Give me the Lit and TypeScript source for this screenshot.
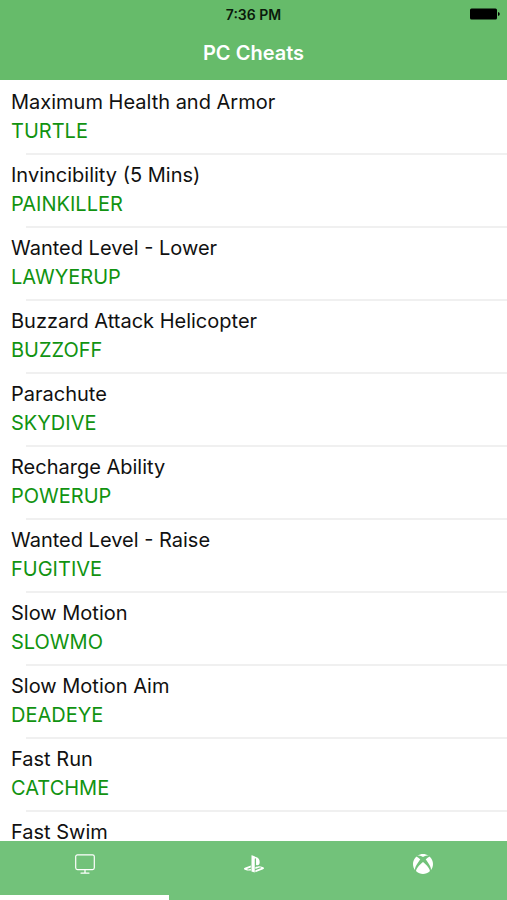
import { LitElement, html, css, nothing } from "lit";
import { customElement, state } from "lit/decorators.js";
import { classMap } from "lit/directives/class-map.js";

interface Cheat {
  name: string;
  code?: string;
}

const CHEATS: Cheat[] = [
  { name: "Maximum Health and Armor", code: "TURTLE" },
  { name: "Invincibility (5 Mins)", code: "PAINKILLER" },
  { name: "Wanted Level - Lower", code: "LAWYERUP" },
  { name: "Buzzard Attack Helicopter", code: "BUZZOFF" },
  { name: "Parachute", code: "SKYDIVE" },
  { name: "Recharge Ability", code: "POWERUP" },
  { name: "Wanted Level - Raise", code: "FUGITIVE" },
  { name: "Slow Motion", code: "SLOWMO" },
  { name: "Slow Motion Aim", code: "DEADEYE" },
  { name: "Fast Run", code: "CATCHME" },
  { name: "Fast Swim" },
];

const pcIcon = html`<svg class="icon" viewBox="1 1 20 20" aria-hidden="true">
  <rect x="1.7" y="1.8" width="18.6" height="14.8" rx="1.8" fill="none" stroke="currentColor" stroke-width="1.2" />
  <path d="M11 16.6V20M7 20.1h8" fill="none" stroke="currentColor" stroke-width="1.3" stroke-linecap="round" />
</svg>`;

const playstationIcon = html`<svg class="icon" viewBox="0 0 24 24" aria-hidden="true">
  <path
    fill="currentColor"
    d="M8.985 1.596v19.348l3.915 1.361V6.188c0-.69.304-1.151.794-.991.636.181.76.814.76 1.505v6.376c2.441 1.193 4.362-.002 4.362-3.153 0-3.237-1.126-5.175-4.438-6.327-1.307-.448-3.728-1.686-5.391-2.002h-.002zm4.656 18.042l6.296-2.475c.715-.258.826-.625.246-.818-.586-.192-1.637-.139-2.357.123l-4.205 1.599v-2.485l.24-.085s1.201-.42 2.913-.615c1.696-.18 3.785.029 5.437.661 1.848.601 2.041 1.472 1.576 2.072s-1.622 1.036-1.622 1.036l-8.544 3.307v-2.297l.02-.023zM1.808 19.2c-1.9-.545-2.214-1.668-1.352-2.321.801-.585 2.159-1.051 2.159-1.051l5.616-2.113v2.413L4.206 17.6c-.705.271-.825.632-.239.826.586.195 1.637.15 2.343-.12L8.248 17.6v2.074c-.121.029-.256.044-.391.073-1.938.33-3.995.196-6.037-.479l-.012-.068z"
  />
</svg>`;

const xboxIcon = html`<svg class="icon" viewBox="0 0 24 24" aria-hidden="true">
  <path
    fill="currentColor"
    d="M4.102 21.033C6.211 22.881 8.977 24 12 24c3.026 0 5.789-1.119 7.902-2.967 1.877-1.912-4.316-8.709-7.902-11.417-3.582 2.708-9.779 9.505-7.898 11.417zm11.16-14.406c2.5 2.961 7.484 10.313 6.076 12.912C23.002 17.48 24 14.861 24 12.004c0-3.34-1.365-6.362-3.57-8.536 0 0-.027-.022-.082-.042-.063-.022-.152-.045-.281-.045-.592 0-1.985.434-4.805 3.246zM3.654 3.426c-.057.02-.082.041-.086.042C1.365 5.642 0 8.664 0 12.004c0 2.854.998 5.473 2.661 7.533-1.401-2.605 3.579-9.951 6.08-12.91-2.82-2.813-4.216-3.245-4.806-3.245-.131 0-.223.021-.281.046v-.002zM12 3.551S9.055 1.828 6.755 1.746c-.903-.033-1.454.295-1.521.339C7.379.646 9.659 0 11.984 0H12c2.334 0 4.605.646 6.766 2.085-.068-.046-.615-.372-1.52-.339C14.946 1.828 12 3.545 12 3.545v.006z"
  />
</svg>`;

const TABS = [
  { label: "PC", icon: pcIcon },
  { label: "PlayStation", icon: playstationIcon },
  { label: "Xbox", icon: xboxIcon },
];

@customElement("app-root")
export class AppRoot extends LitElement {
  @state() private active = 0;

  static styles = css`
    :host {
      display: flex;
      flex-direction: column;
      height: 100vh;
      background: #fff;
      color: #111;
      font-family: Inter, "Liberation Sans", sans-serif;
    }
    .header {
      flex: none;
      background: #66bb6a;
      text-align: center;
    }
    .status {
      display: grid;
      grid-template-columns: 1fr auto 1fr;
      align-items: center;
      height: 28px;
      padding: 0 7px;
      color: #0a1a0b;
      font-size: 14px;
      font-weight: 600;
    }
    .time {
      grid-column: 2;
    }
    .battery {
      justify-self: end;
      width: 30px;
      height: 12px;
    }
    .title {
      margin: 0;
      height: 52px;
      line-height: 50px;
      font-size: 20px;
      font-weight: 600;
      color: #fff;
    }
    .list {
      flex: 1;
      min-height: 0;
      margin: 0;
      padding: 2px 0 0;
      list-style: none;
      overflow-y: auto;
      scrollbar-width: none;
    }
    .row {
      padding: 6px 0 0 11px;
      font-size: 20px;
      line-height: 29px;
    }
    .row::after {
      content: "";
      display: block;
      height: 2px;
      margin: 7px 0 0 15px;
      background: #f0f0f0;
    }
    .name,
    .code {
      margin: 0;
    }
    .code {
      color: #119311;
    }
    .tabs {
      flex: none;
      display: grid;
      grid-template-columns: repeat(3, 1fr);
      background: #72c27a;
    }
    .tab {
      display: flex;
      justify-content: center;
      height: 59px;
      padding: 13px 0 0;
      border: 0;
      border-bottom: 5px solid transparent;
      background: none;
      color: #fff;
      cursor: pointer;
    }
    .tab.active {
      border-bottom-color: #fff;
    }
    .icon {
      width: 20px;
      height: 20px;
    }
  `;

  render() {
    return html`
      <header class="header">
        <div class="status">
          <span class="time">7:36 PM</span>
          <svg class="battery" viewBox="0 0 30 12" role="img" aria-label="Battery full">
            <rect x="0" y="0.5" width="27" height="11" rx="1.5" fill="#000" />
            <path d="M28 4v4q1.8-.5 1.8-2T28 4z" fill="#000" />
          </svg>
        </div>
        <h1 class="title">PC Cheats</h1>
      </header>
      <ul class="list">
        ${CHEATS.map(
          (cheat) => html`<li class="row">
            <p class="name">${cheat.name}</p>
            ${cheat.code ? html`<p class="code">${cheat.code}</p>` : nothing}
          </li>`
        )}
      </ul>
      <nav class="tabs">
        ${TABS.map(
          (tab, i) => html`<button
            class=${classMap({ tab: true, active: i === this.active })}
            aria-label=${tab.label}
            @click=${() => (this.active = i)}
          >
            ${tab.icon}
          </button>`
        )}
      </nav>
    `;
  }
}
